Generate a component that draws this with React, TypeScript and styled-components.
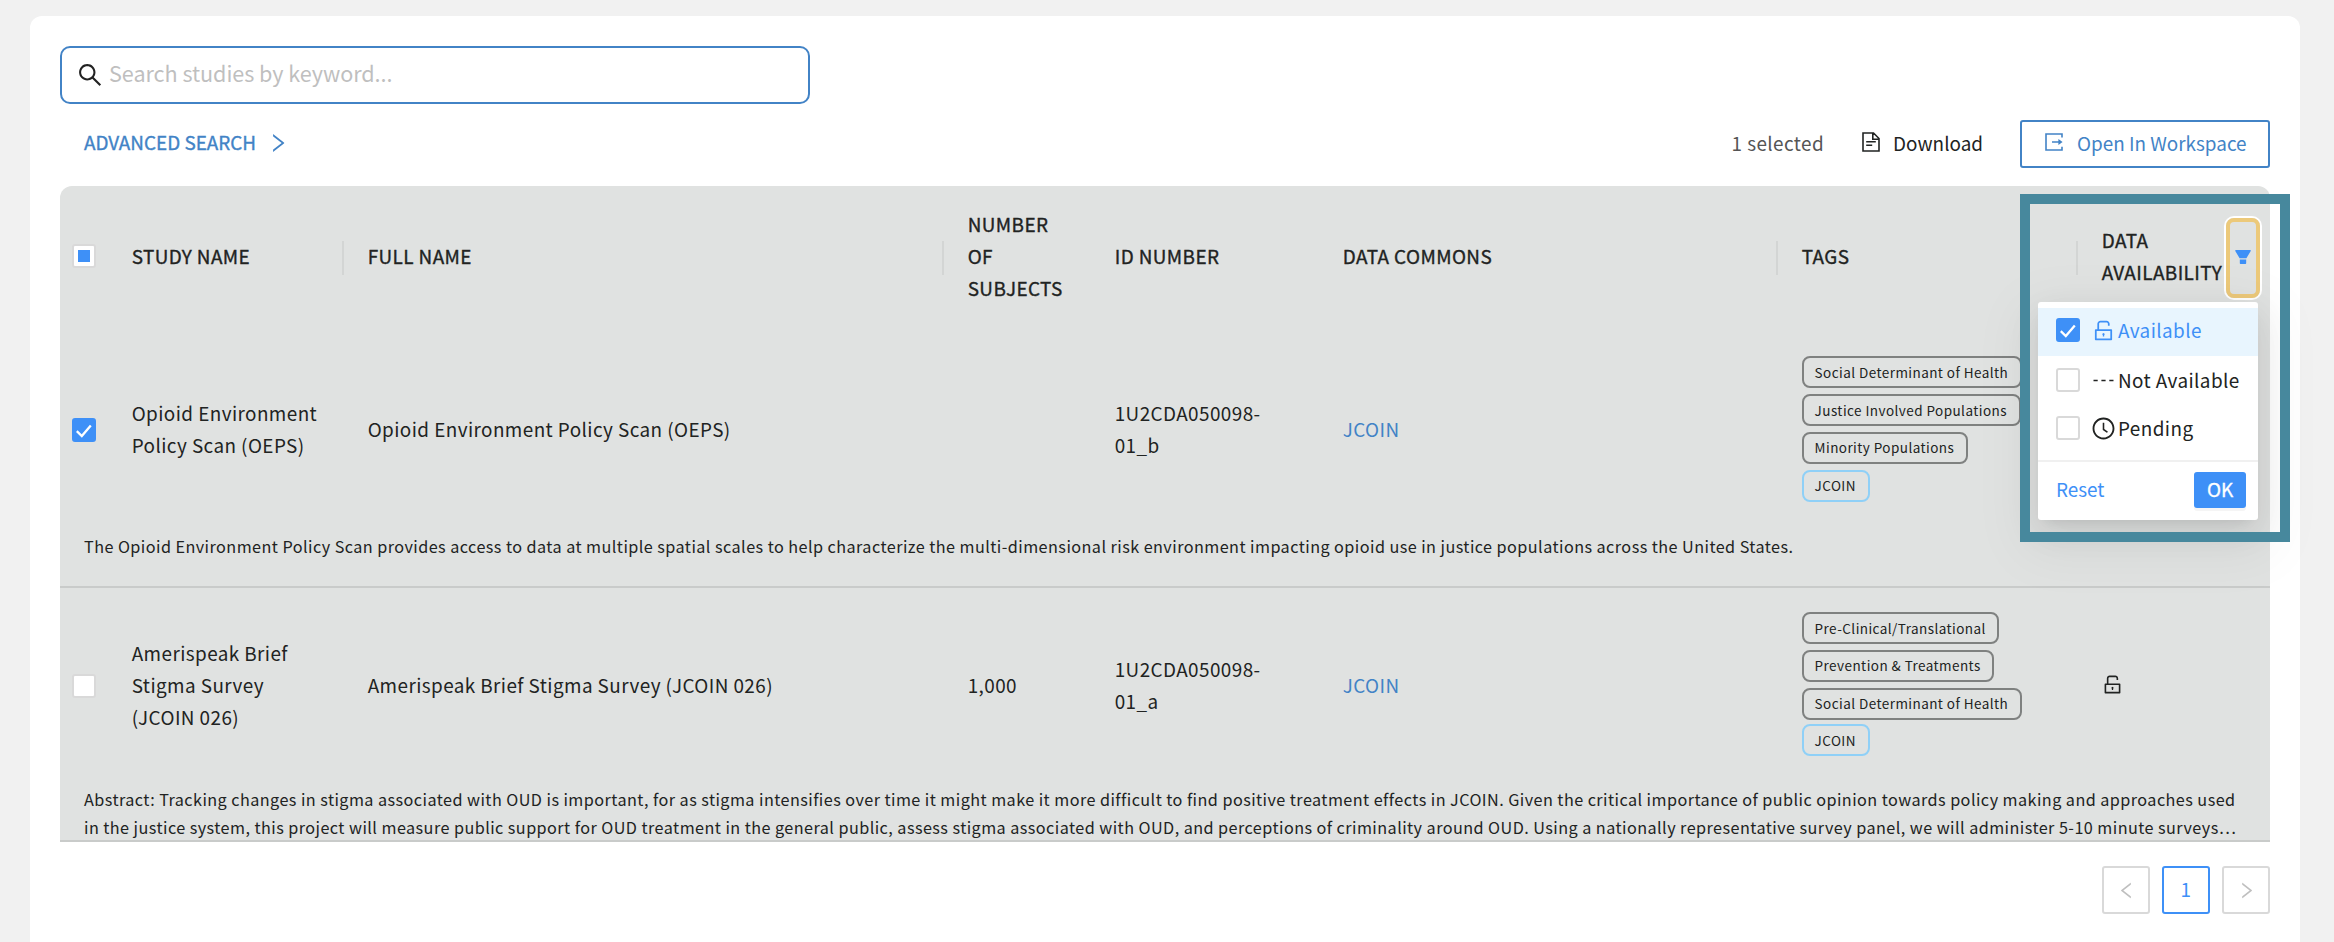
import React from 'react';
import styled, { createGlobalStyle, css } from 'styled-components';
import {
  AiFillFilter,
  AiOutlineClockCircle,
  AiOutlineLeft,
  AiOutlineRight,
  AiOutlineSearch,
  AiOutlineUnlock,
} from 'react-icons/ai';

const BLUE = '#3e90f7';
const LINK = '#4283c6';

const GlobalStyle = createGlobalStyle`
  * { box-sizing: border-box; }
  body {
    margin: 0;
    background: #f1f1f1;
    color: #212322;
    font-family: 'Noto Sans CJK SC', sans-serif;
    font-size: 18.9px;
    line-height: 32px;
    letter-spacing: 0.42px;
  }
  svg { display: block; flex: none; }
`;

const semiBold = css`
  -webkit-text-stroke: 0.35px currentColor;
`;

const Page = styled.main`
  height: 942px;
  padding: 16px 34px 0 30px;
  overflow: hidden;
`;

const Card = styled.section`
  position: relative;
  height: 940px;
  padding: 30px;
  background: #fff;
  border-radius: 12px;
`;

const SearchBox = styled.div`
  display: flex;
  align-items: center;
  gap: 5px;
  width: 750px;
  height: 58px;
  padding: 0 14px;
  border: 2px solid ${LINK};
  border-radius: 10px;
  color: #222;
`;

const Placeholder = styled.span`
  padding-bottom: 4px;
  color: #bfbfbf;
  font-size: 21.6px;
  letter-spacing: -0.05px;
`;

const Toolbar = styled.div`
  display: flex;
  justify-content: space-between;
  align-items: center;
  height: 48px;
  margin: 16px 0 18px;
`;

const Label = styled.span`
  padding-bottom: 3px;
`;

const AdvancedSearch = styled.a`
  display: flex;
  align-items: center;
  gap: 10px;
  padding: 0 0 2px 24px;
  color: ${LINK};
  letter-spacing: 0;
  ${Label} { padding-bottom: 2px; ${semiBold} }
`;

const Actions = styled.div`
  display: flex;
  align-items: center;
`;

const Selected = styled(Label)`
  margin-right: 38px;
  color: #555;
`;

const Download = styled.span`
  display: flex;
  align-items: center;
  gap: 13px;
  margin-right: 37px;
  letter-spacing: 0;
  svg { margin-top: -4px; }
`;

const WorkspaceButton = styled.button`
  display: flex;
  align-items: center;
  gap: 14px;
  width: 250px;
  height: 48px;
  padding: 0 0 0 23px;
  background: #fff;
  border: 2px solid ${LINK};
  border-radius: 3px;
  color: ${LINK};
  font: inherit;
  letter-spacing: 0;
  svg { margin-top: -4px; }
`;

const Table = styled.div`
  height: 656px;
  background: #e0e2e1;
  border-bottom: 2px solid #c9cbca;
  border-radius: 12px 12px 0 0;
`;

const Columns = styled.div<{ $height: number }>`
  display: grid;
  grid-template-columns: 48px 236px 600px 147px 228px 459px 300px 192px;
  align-items: center;
  height: ${(p) => p.$height}px;
`;

const HeadColumns = styled(Columns)`
  padding-bottom: 2px;
`;

const Cell = styled.div`
  padding: 0 0 3px 23.7px;
  white-space: pre-line;
`;

const HeadCell = styled(Cell)<{ $divider?: boolean }>`
  display: flex;
  align-items: center;
  align-self: stretch;
  padding-bottom: 0;
  ${semiBold}
  ${(p) =>
    p.$divider &&
    css`
      background: linear-gradient(#d3d5d4, #d3d5d4) right 0 top 55px / 2px 34px no-repeat;
    `}
`;

const TagCell = styled.div`
  padding: 0 0 2px 24px;
`;

const CheckCell = styled.div`
  padding-left: 12px;
`;

const Checkbox = styled.span<{ $on?: boolean }>`
  display: flex;
  align-items: center;
  justify-content: center;
  flex: none;
  width: 24px;
  height: 24px;
  background: ${(p) => (p.$on ? BLUE : '#fff')};
  border: 2px solid ${(p) => (p.$on ? BLUE : '#d9d9d9')};
  border-radius: 3px;
`;

const Indeterminate = styled.span`
  width: 12px;
  height: 12px;
  background: ${BLUE};
`;

const Link = styled.a`
  color: ${LINK};
`;

const TagList = styled.div`
  display: flex;
  flex-direction: column;
  align-items: flex-start;
  gap: 6px;
  height: 146px;
`;

const Tag = styled.span<{ $accent?: boolean; $low?: boolean; $tight?: boolean }>`
  height: 32px;
  margin-top: ${(p) => (p.$tight ? -2 : 0)}px;
  padding: ${(p) => (p.$low ? 2 : 0.5)}px 11.6px 0 10.6px;
  border: 2px solid ${(p) => (p.$accent ? '#8fd0f7' : '#7f8180')};
  border-radius: 8px;
  font-size: 13.5px;
  line-height: 24px;
  letter-spacing: 0.44px;
  white-space: nowrap;
`;

const Availability = styled.span`
  display: block;
  margin: -1px 0 0 -1px;
`;

const Summary = styled.p<{ $height: number; $divider?: boolean; $top?: number }>`
  height: ${(p) => p.$height}px;
  margin: 0;
  padding: ${(p) => p.$top ?? 0}px 0 0 24px;
  border-bottom: ${(p) => (p.$divider ? '2px solid #c9cbca' : 'none')};
  font-size: 16.2px;
  line-height: 28px;
  letter-spacing: 0.446px;
  white-space: pre;
`;

const Pagination = styled.nav`
  display: flex;
  justify-content: flex-end;
  gap: 12px;
  margin-top: 24px;
`;

const PageButton = styled.span<{ $active?: boolean }>`
  display: flex;
  align-items: center;
  justify-content: center;
  width: 48px;
  height: 48px;
  padding-bottom: ${(p) => (p.$active ? 3 : 0)}px;
  border: 2px solid ${(p) => (p.$active ? BLUE : '#d9d9d9')};
  border-radius: 3px;
  color: ${(p) => (p.$active ? BLUE : '#bfbfbf')};
`;

const FilterButton = styled.span`
  position: absolute;
  top: 202px;
  left: 2196px;
  display: flex;
  align-items: center;
  justify-content: center;
  width: 34px;
  height: 80px;
  padding-bottom: 2px;
  border: 4px solid #ecc97a;
  border-radius: 8px;
  box-shadow: 0 0 0 2px #fff;
  color: ${BLUE};
`;

const FilterMenu = styled.div`
  position: absolute;
  top: 286px;
  left: 2008px;
  width: 220px;
  height: 218px;
  padding-top: 6px;
  background: #fff;
  border-radius: 3px;
  box-shadow: 0 6px 12px -8px rgba(0, 0, 0, 0.12), 0 12px 32px rgba(0, 0, 0, 0.08),
    0 18px 56px 16px rgba(0, 0, 0, 0.05);
`;

const MenuItem = styled.div<{ $on?: boolean }>`
  display: flex;
  align-items: center;
  height: 48px;
  padding: 0 0 ${(p) => (p.$on ? 4 : 0)}px 18px;
  background: ${(p) => (p.$on ? '#e8f5fe' : 'transparent')};
  color: ${(p) => (p.$on ? BLUE : 'inherit')};
  white-space: nowrap;
  svg { margin-right: 2px; }
  ${Checkbox} { margin-right: 11px; }
  ${Checkbox} svg { margin: 0; }
`;

const MenuFooter = styled.div`
  display: flex;
  align-items: center;
  justify-content: space-between;
  height: 60px;
  margin-top: 8px;
  padding: 0 12px 2px 18px;
  border-top: 2px solid #f0f0f0;
  color: ${BLUE};
  letter-spacing: 0;
`;

const OkButton = styled.button`
  width: 52px;
  height: 36px;
  padding: 0 0 2px;
  background: ${BLUE};
  border: 0;
  border-radius: 3px;
  box-shadow: 0 3px 0 rgba(0, 0, 0, 0.04);
  color: #fff;
  font: inherit;
  ${semiBold}
`;

const Highlight = styled.div`
  position: absolute;
  top: 178px;
  left: 1990px;
  width: 270px;
  height: 348px;
  border: 10px solid #47889d;
`;

const Check = () => (
  <svg width="20" height="20" viewBox="0 0 20 20" fill="none" stroke="#fff" strokeWidth="2.3">
    <path d="M2.8 11.2l5 4.8 9-10.6" />
  </svg>
);

const DocumentIcon = () => (
  <svg width="18" height="20" viewBox="0 0 18 20" fill="none" stroke="currentColor" strokeWidth="1.6">
    <path d="M1 1h10.5L17 6.5V19H1zM10.8 1.2v6H17M4.2 9.8h9.6M4.2 13.2h6" />
  </svg>
);

const ExportIcon = () => (
  <svg width="18" height="18" viewBox="0 0 18 18" fill="none" stroke="currentColor" strokeWidth="1.6">
    <path d="M17 4.6V1H1v16h16v-3.2M7 9h9" />
    <path d="M13.4 5.9L17.6 9l-4.2 3.1z" fill="currentColor" stroke="none" />
  </svg>
);

const DashIcon = () => (
  <svg width="25" height="25" viewBox="0 0 25 25" stroke="currentColor" strokeWidth="1.7">
    <path d="M2.5 12.5h4.2M10.4 12.5h4.2M18.3 12.5h4.2" />
  </svg>
);

type StudyTag = { text: string; low?: boolean; accent?: boolean; tight?: boolean };

type Study = {
  name: string;
  fullName: string;
  subjects?: string;
  id: string;
  tags: StudyTag[];
  open?: boolean;
  checked?: boolean;
  height: number;
};

const StudyRow = ({ study }: { study: Study }) => (
  <Columns $height={study.height}>
    <CheckCell>
      <Checkbox $on={study.checked}>{study.checked && <Check />}</Checkbox>
    </CheckCell>
    <Cell>{study.name}</Cell>
    <Cell>{study.fullName}</Cell>
    <Cell>{study.subjects}</Cell>
    <Cell>{study.id}</Cell>
    <Cell>
      <Link>JCOIN</Link>
    </Cell>
    <TagCell>
      <TagList>
        {study.tags.map((t) => (
          <Tag key={t.text} $low={t.low} $accent={t.accent} $tight={t.tight}>
            {t.text}
          </Tag>
        ))}
      </TagList>
    </TagCell>
    <Cell>
      {study.open && (
        <Availability>
          <AiOutlineUnlock size={23} />
        </Availability>
      )}
    </Cell>
  </Columns>
);

const oeps: Study = {
  name: 'Opioid Environment\nPolicy Scan (OEPS)',
  fullName: 'Opioid Environment Policy Scan (OEPS)',
  id: '1U2CDA050098-\n01_b',
  checked: true,
  height: 204,
  tags: [
    { text: 'Social Determinant of Health', low: true },
    { text: 'Justice Involved Populations', low: true },
    { text: 'Minority Populations' },
    { text: 'JCOIN', accent: true },
  ],
};

const amerispeak: Study = {
  name: 'Amerispeak Brief\nStigma Survey\n(JCOIN 026)',
  fullName: 'Amerispeak Brief Stigma Survey (JCOIN 026)',
  subjects: '1,000',
  id: '1U2CDA050098-\n01_a',
  open: true,
  height: 196,
  tags: [
    { text: 'Pre-Clinical/Translational', low: true },
    { text: 'Prevention & Treatments' },
    { text: 'Social Determinant of Health' },
    { text: 'JCOIN', accent: true, low: true, tight: true },
  ],
};

export default function App() {
  return (
    <Page>
      <GlobalStyle />
      <Card>
        <SearchBox>
          <AiOutlineSearch size={28} />
          <Placeholder>Search studies by keyword...</Placeholder>
        </SearchBox>
        <Toolbar>
          <AdvancedSearch>
            <Label>ADVANCED SEARCH</Label>
            <AiOutlineRight size={24} />
          </AdvancedSearch>
          <Actions>
            <Selected>1 selected</Selected>
            <Download>
              <DocumentIcon />
              <Label>Download</Label>
            </Download>
            <WorkspaceButton>
              <ExportIcon />
              <Label>Open In Workspace</Label>
            </WorkspaceButton>
          </Actions>
        </Toolbar>
        <Table>
          <HeadColumns $height={142}>
            <CheckCell>
              <Checkbox>
                <Indeterminate />
              </Checkbox>
            </CheckCell>
            <HeadCell $divider>STUDY NAME</HeadCell>
            <HeadCell $divider>FULL NAME</HeadCell>
            <HeadCell>{'NUMBER\nOF\nSUBJECTS'}</HeadCell>
            <HeadCell>ID NUMBER</HeadCell>
            <HeadCell $divider>DATA COMMONS</HeadCell>
            <HeadCell $divider>TAGS</HeadCell>
            <HeadCell>{'DATA\nAVAILABILITY'}</HeadCell>
          </HeadColumns>
          <StudyRow study={oeps} />
          <Summary $height={56} $divider>
            The Opioid Environment Policy Scan provides access to data at multiple spatial scales to help characterize the multi-dimensional risk environment impacting opioid use in justice populations across the United States.
          </Summary>
          <StudyRow study={amerispeak} />
          <Summary $height={56} $top={1}>
            {'Abstract: Tracking changes in stigma associated with OUD is important, for as stigma intensifies over time it might make it more difficult to find positive treatment effects in JCOIN. Given the critical importance of public opinion towards policy making and approaches used\nin the justice system, this project will measure public support for OUD treatment in the general public, assess stigma associated with OUD, and perceptions of criminality around OUD. Using a nationally representative survey panel, we will administer 5-10 minute surveys…'}
          </Summary>
        </Table>
        <Pagination>
          <PageButton>
            <AiOutlineLeft size={21} />
          </PageButton>
          <PageButton $active>1</PageButton>
          <PageButton>
            <AiOutlineRight size={21} />
          </PageButton>
        </Pagination>
        <FilterButton>
          <AiFillFilter size={20} />
        </FilterButton>
        <FilterMenu>
          <MenuItem $on>
            <Checkbox $on>
              <Check />
            </Checkbox>
            <AiOutlineUnlock size={25} />
            Available
          </MenuItem>
          <MenuItem>
            <Checkbox />
            <DashIcon />
            Not Available
          </MenuItem>
          <MenuItem>
            <Checkbox />
            <AiOutlineClockCircle size={25} />
            Pending
          </MenuItem>
          <MenuFooter>
            <Label>Reset</Label>
            <OkButton>OK</OkButton>
          </MenuFooter>
        </FilterMenu>
        <Highlight />
      </Card>
    </Page>
  );
}
